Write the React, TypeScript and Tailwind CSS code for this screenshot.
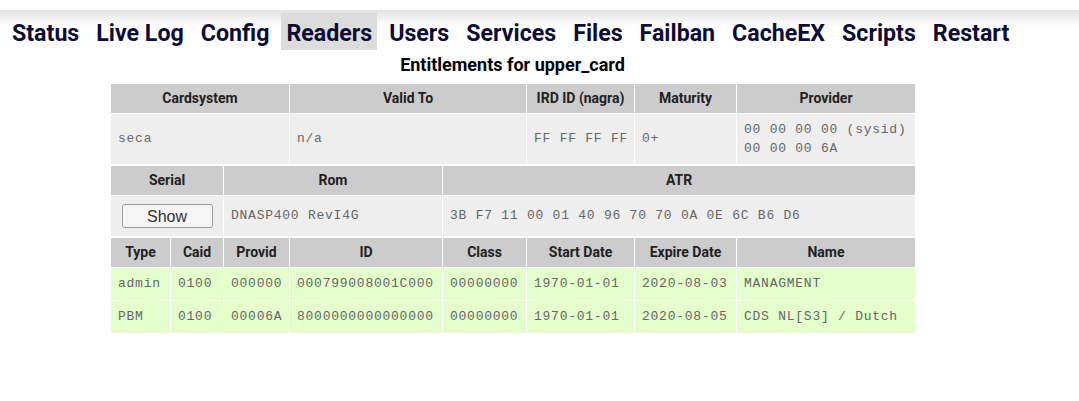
const nav = ["Status", "Live Log", "Config", "Readers", "Users", "Services", "Files", "Failban", "CacheEX", "Scripts", "Restart"];

const th = "bg-[#cccccc] border border-white h-[30px] text-[14px] font-bold text-[#222] text-center align-middle";
const td = "border border-white pl-[7px] pr-[2px] whitespace-nowrap text-left align-middle font-['Liberation_Mono',monospace] text-[13px] tracking-[0.75px] text-[#666]";

const ents = [
  ["admin", "0100", "000000", "000799008001C000", "00000000", "1970-01-01", "2020-08-03", "MANAGMENT"],
  ["PBM", "0100", "00006A", "8000000000000000", "00000000", "1970-01-01", "2020-08-05", "CDS NL[S3] / Dutch"],
];

export default function App() {
  return (
    <div className="w-[1079px] h-[401px] bg-white font-['Roboto',sans-serif]">
      <div className="pt-[10px]">
        <div className="bg-gradient-to-b from-[#e2e2e2] via-white via-40% to-white">
          <nav className="flex items-center gap-[7px] pl-[7px] pt-[3px]">
            {nav.map((n) => (
              <span
                key={n}
                className={`px-[5px] h-[37px] pt-[3px] flex items-center text-[23.2px] font-bold text-[#0c0c38] ${n === "Readers" ? "bg-[#dcdcdc]" : ""}`}
              >
                {n}
              </span>
            ))}
          </nav>
        </div>
      </div>
      <div className="w-[1025px] flex flex-col items-center">
        <h2 className="text-[18px] font-bold text-black mt-[1px] h-[32px] leading-[28px]">Entitlements for upper_card</h2>
        <div className="w-[805px]">
          <table className="w-[805px] table-fixed border-collapse">
            <colgroup>
              <col className="w-[179px]" />
              <col className="w-[237px]" />
              <col className="w-[108px]" />
              <col className="w-[102px]" />
              <col className="w-[179px]" />
            </colgroup>
            <tbody>
              <tr>
                <th className={th}>Cardsystem</th>
                <th className={th}>Valid To</th>
                <th className={th}>IRD ID (nagra)</th>
                <th className={th}>Maturity</th>
                <th className={th}>Provider</th>
              </tr>
              <tr className="bg-[#eeeeee] h-[51px]">
                <td className={td}>seca</td>
                <td className={td}>n/a</td>
                <td className={td}>FF FF FF FF</td>
                <td className={td}>0+</td>
                <td className={`${td} leading-[19px]`}>
                  00 00 00 00 (sysid)
                  <br />
                  00 00 00 6A
                </td>
              </tr>
            </tbody>
          </table>
          <table className="w-[805px] table-fixed border-collapse">
            <colgroup>
              <col className="w-[113px]" />
              <col className="w-[219px]" />
              <col className="w-[473px]" />
            </colgroup>
            <tbody>
              <tr>
                <th className={th}>Serial</th>
                <th className={th}>Rom</th>
                <th className={th}>ATR</th>
              </tr>
              <tr className="bg-[#eeeeee] h-[41px]">
                <td className="border border-white text-center align-middle">
                  <button className="w-[91px] h-[24px] rounded-[3px] border border-[#9a9a9a] bg-[#f6f6f6] text-[16px] text-[#333] font-['Liberation_Sans',Arial,sans-serif]">
                    Show
                  </button>
                </td>
                <td className={td}>DNASP400 RevI4G</td>
                <td className={td}>3B F7 11 00 01 40 96 70 70 0A 0E 6C B6 D6</td>
              </tr>
            </tbody>
          </table>
          <table className="w-[805px] table-fixed border-collapse">
            <colgroup>
              <col className="w-[60px]" />
              <col className="w-[53px]" />
              <col className="w-[66px]" />
              <col className="w-[153px]" />
              <col className="w-[84px]" />
              <col className="w-[108px]" />
              <col className="w-[102px]" />
              <col className="w-[179px]" />
            </colgroup>
            <tbody>
              <tr>
                {["Type", "Caid", "Provid", "ID", "Class", "Start Date", "Expire Date", "Name"].map((h) => (
                  <th key={h} className={th}>{h}</th>
                ))}
              </tr>
              {ents.map((r) => (
                <tr key={r[0]} className="bg-[#e5ffcc] h-[33px]">
                  {r.map((c, i) => (
                    <td key={i} className={td}>{c}</td>
                  ))}
                </tr>
              ))}
            </tbody>
          </table>
        </div>
      </div>
    </div>
  );
}
